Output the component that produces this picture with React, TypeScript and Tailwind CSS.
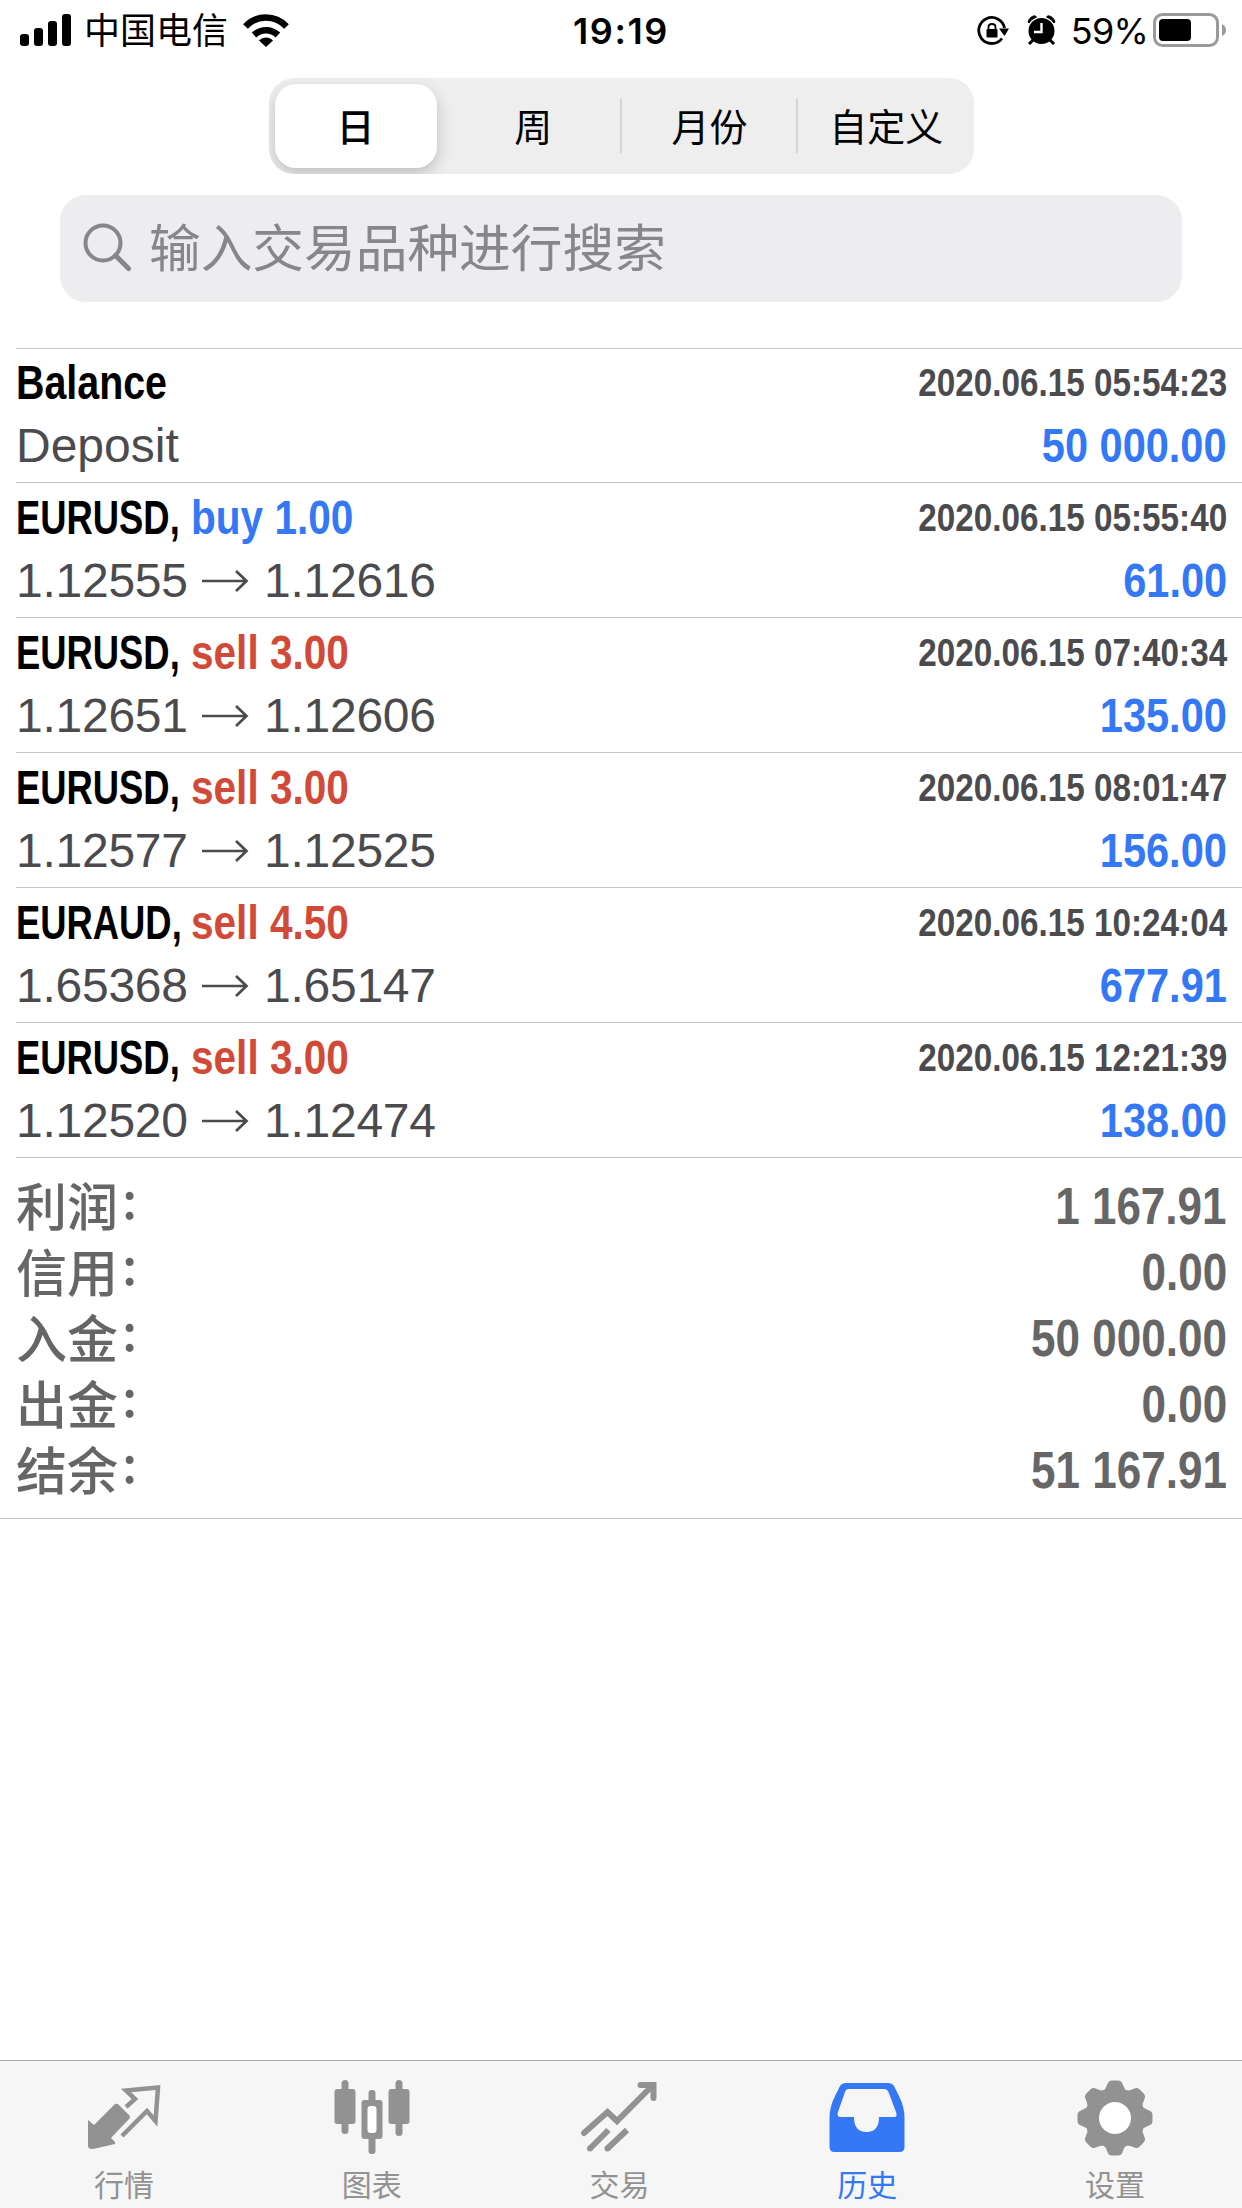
import type { ReactNode } from 'react';

type Deal = {
  symbol: string;
  action?: string;
  side?: 'buy' | 'sell';
  time: string;
  open?: string;
  close?: string;
  note?: string;
  profit: string;
};

const deals: Deal[] = [
  { symbol: 'Balance', time: '2020.06.15 05:54:23', note: 'Deposit', profit: '50 000.00' },
  { symbol: 'EURUSD,', action: 'buy 1.00', side: 'buy', time: '2020.06.15 05:55:40', open: '1.12555', close: '1.12616', profit: '61.00' },
  { symbol: 'EURUSD,', action: 'sell 3.00', side: 'sell', time: '2020.06.15 07:40:34', open: '1.12651', close: '1.12606', profit: '135.00' },
  { symbol: 'EURUSD,', action: 'sell 3.00', side: 'sell', time: '2020.06.15 08:01:47', open: '1.12577', close: '1.12525', profit: '156.00' },
  { symbol: 'EURAUD,', action: 'sell 4.50', side: 'sell', time: '2020.06.15 10:24:04', open: '1.65368', close: '1.65147', profit: '677.91' },
  { symbol: 'EURUSD,', action: 'sell 3.00', side: 'sell', time: '2020.06.15 12:21:39', open: '1.12520', close: '1.12474', profit: '138.00' },
];

const totals = [
  { label: '利润', value: '1 167.91' },
  { label: '信用', value: '0.00' },
  { label: '入金', value: '50 000.00' },
  { label: '出金', value: '0.00' },
  { label: '结余', value: '51 167.91' },
];

const periods = ['日', '周', '月份', '自定义'];

function StatusBar() {
  return (
    <header className="flex h-[60px] items-center justify-between pl-5 pr-[15px] text-black">
      <div className="flex w-[395px] items-center">
        <svg width="52" height="33" viewBox="0 0 52 33">
          <rect x="0" y="20" width="9" height="12" rx="3" />
          <rect x="14" y="14" width="9" height="18" rx="3" />
          <rect x="28" y="7" width="9" height="25" rx="3" />
          <rect x="42" y="0" width="9" height="32" rx="3" />
        </svg>
        <span className="ml-3 pt-[3px] font-['Inter','Noto_Sans_CJK_SC',sans-serif] text-[36px] leading-[57px]">中国电信</span>
        <svg className="ml-[15px]" width="46" height="33" viewBox="0 0 46 33" fill="none" stroke="#000">
          <path d="M2.5 12.5C14 .5 32 .5 43.5 12.5" strokeWidth="6.5" />
          <path d="M11 21C18 14.5 28 14.5 35 21" strokeWidth="6.5" />
          <path d="M16 26.500C20 22.500 26 22.500 30 26.500L23 33Z" fill="#000" stroke="none" />
        </svg>
      </div>
      <span className="pt-[2px] font-['Inter',sans-serif] text-[36px] font-semibold leading-[58px] tracking-[1.6px]">19:19</span>
      <div className="flex w-[400px] items-center justify-end">
        <svg className="mt-[2px]" width="32" height="30" viewBox="0 0 32 30">
          <path d="M27.500 12A13 13 0 1 0 25 22.500" fill="none" stroke="#000" strokeWidth="2.800" />
          <path d="M22 12.500H32L27.500 20Z" />
          <rect x="9.500" y="13" width="11" height="8.500" rx="1" />
          <path d="M11.500 14V11Q11.500 8 15 8Q18.500 8 18.500 11V14" fill="none" stroke="#000" strokeWidth="1.800" />
        </svg>
        <svg className="ml-[18px]" width="30" height="30" viewBox="0 0 30 30">
          <circle cx="14.500" cy="16" r="13" />
          <path d="M1 7Q3 1 8 .8L9.500 2Q4 4 2 8ZM28 7Q26 1 21 .8L19.500 2Q25 4 27 8Z" stroke="#000" strokeWidth="1" />
          <path d="M6 25L2 29M23 25L27 29" stroke="#000" strokeWidth="3" />
          <path d="M14.500 8V17H7" fill="none" stroke="#fff" strokeWidth="2.400" />
        </svg>
        <span className="ml-[14px] pt-[2px] font-['Inter',sans-serif] text-[36px] leading-[58px] tracking-[-0.8px]">59%</span>
        <svg className="ml-[5px]" width="74" height="34" viewBox="0 0 74 34">
          <rect x="1.500" y="1.500" width="63" height="31" rx="8" fill="none" stroke="#9a9a9a" strokeWidth="3" />
          <rect x="6" y="6" width="32" height="22" rx="4" />
          <path d="M69 11Q73 13 73 17Q73 21 69 23Z" fill="#9a9a9a" />
        </svg>
      </div>
    </header>
  );
}

function PeriodSwitch() {
  return (
    <div className="mx-auto mt-[18px] flex h-24 w-[705px] overflow-hidden rounded-[25px] bg-[#eeeeef]">
      {periods.map((p, i) => (
        <button
          key={p}
          className={`flex h-full flex-1 items-center justify-center font-['Noto_Sans_CJK_SC',sans-serif] text-[38px] ${
            i === 0 ? 'font-medium' : 'font-normal'
          }`}
        >
          {i === 0 ? (
            <span className="mr-[2px] flex h-[84px] w-[162px] items-center justify-center rounded-[21px] bg-white pb-[3px] shadow-[0_6px_16px_rgba(0,0,0,0.2)]">
              {p}
            </span>
          ) : (
            <>
              <span className="flex-1 pb-[4px] pl-[2px]">{p}</span>
              {i < 3 && <span className="-mr-px h-[54px] w-[2px] bg-[#d5d5d7]" />}
            </>
          )}
        </button>
      ))}
    </div>
  );
}

function SearchField() {
  return (
    <div className="mx-[60px] mt-[21px] flex h-[107px] items-center rounded-[26px] bg-[#ededef] pl-[23px] text-[#87878a]">
      <svg className="-mt-[2px]" width="50" height="50" viewBox="0 0 50 50" fill="none" stroke="currentColor">
        <circle cx="20" cy="20" r="17.500" strokeWidth="4" />
        <path d="M32.500 32.500L45.500 45.500" strokeWidth="5" strokeLinecap="round" />
      </svg>
      <span className="ml-4 pb-[7px] font-['Noto_Sans_CJK_SC',sans-serif] text-[51.700px]">输入交易品种进行搜索</span>
    </div>
  );
}

function DealRow({ deal }: { deal: Deal }) {
  return (
    <div className="ml-4 h-[135px] border-t border-[#c4c4c6] pr-[15px] pt-[8px] first:h-[134px] first:pt-[7px]">
      <div className="flex h-[54px] items-center justify-between font-bold">
        <div className="flex whitespace-nowrap text-[48px] leading-[54px]">
          <span
            className={`origin-left text-black ${
              deal.action ? 'w-[175px] scale-x-[0.758]' : 'w-[160px] scale-x-[0.82]'
            }`}
          >
            {deal.symbol}
          </span>
          {deal.action && (
            <span
              className={`w-[160px] origin-left scale-x-[0.845] ${
                deal.side === 'buy' ? 'text-[#3478f6]' : 'text-[#d14a38]'
              }`}
            >
              {deal.action}
            </span>
          )}
        </div>
        <span className="origin-right scale-x-[0.853] whitespace-nowrap text-[39px] leading-[54px] text-[#4b4b4e]">{deal.time}</span>
      </div>
      <div className="mt-[9px] flex h-[54px] items-center justify-between text-[48px] leading-[54px]">
        {deal.note ? (
          <span className="text-[#4b4b4e]">{deal.note}</span>
        ) : (
          <div className="flex items-center tracking-[-0.25px] text-[#4b4b4e]">
            <span className="w-[171px]">{deal.open}</span>
            <svg className="ml-[15px]" width="47" height="24" viewBox="0 0 47 24" fill="none" stroke="currentColor" strokeWidth="2.700">
              <path d="M0 12H44M34 2L44.500 12L34 22" />
            </svg>
            <span className="ml-[15px]">{deal.close}</span>
          </div>
        )}
        <span className="origin-right scale-x-[0.865] whitespace-nowrap font-bold text-[#3478f6]">{deal.profit}</span>
      </div>
    </div>
  );
}

function Totals() {
  return (
    <section className="border-b border-[#c4c4c6]">
      <div className="ml-4 h-[361px] border-t border-[#c4c4c6] pr-[15px] pt-[16px] text-[#666666]">
        {totals.map((t) => (
          <div key={t.label} className="flex h-[66px] items-center justify-between">
            <div className="-mt-[7px] flex font-['Noto_Sans_CJK_SC',sans-serif] text-[51px] font-medium leading-[62px]">
              <span>{t.label}</span>
              <span className="-mt-[7px] ml-[4px]">:</span>
            </div>
            <span className="origin-right scale-x-[0.863] whitespace-nowrap text-[51px] font-bold leading-[62px]">{t.value}</span>
          </div>
        ))}
      </div>
    </section>
  );
}

function QuotesIcon() {
  return (
    <svg width="76" height="76" viewBox="0 0 76 76">
      <path d="M2 40L8 45L29 24Q31 23 33 25L43 35Q45 37 43 39L25 58L29 62V64L7 69Q2 69 2 66Z" fill="#929292" />
      <path d="M40 27L49 19L40 10.500L72 7.500L69.500 41L61 31L36 56" fill="none" stroke="#929292" strokeWidth="4.500" />
    </svg>
  );
}

function ChartIcon() {
  return (
    <svg width="76" height="76" viewBox="0 0 76 76" fill="#929292">
      <rect x="7.500" y="0" width="7" height="54" rx="3.500" />
      <rect x="0.500" y="9" width="21" height="35" rx="3" />
      <rect x="34.500" y="10" width="7" height="64" rx="3" />
      <rect x="27.500" y="20" width="21" height="39" rx="3" />
      <rect x="33.500" y="26" width="9" height="27" rx="3" fill="#fff" />
      <rect x="61.500" y="0" width="7" height="56" rx="3.500" />
      <rect x="54.500" y="9" width="21" height="35" rx="3" />
    </svg>
  );
}

function TradeIcon() {
  return (
    <svg width="76" height="76" viewBox="0 0 76 76" fill="none" stroke="#929292" strokeWidth="6">
      <path d="M3 53L26.500 32L36 41L71 6" strokeLinecap="round" />
      <path d="M59.500 5H72.500V18" strokeLinecap="round" />
      <path d="M27.500 50L9 68.500M46 50L26.500 68.500" />
      <path d="M9 68.500V68.400M26.500 68.500V68.400" strokeLinecap="round" />
    </svg>
  );
}

function HistoryIcon() {
  return (
    <svg width="76" height="76" viewBox="0 0 76 76">
      <path d="M17 3H59Q63 3 65 6L70 16Q75.500 27 75.500 38V67Q75.500 72 70.500 72H5.500Q.5 72 .5 67V38Q.5 27 6 16L11 6Q13 3 17 3Z" fill="#3478f6" />
      <path d="M20 9H55Q58 9 59.500 12L67 32Q69 37 65 37H50Q50 52 37.500 52Q25 52 25 37H12Q7 37 9 32L16 12Q17 9 20 9Z" fill="#f6f6f6" />
    </svg>
  );
}

function SettingsIcon() {
  return (
    <svg width="76" height="76" viewBox="0 0 76 76">
      <g fill="#929292">
        <circle cx="38" cy="38" r="30" />
        {[0, 45, 90, 135, 180, 225, 270, 315].map((a) => (
          <path key={a} transform={`rotate(${a} 38 38)`} d="M25 12Q29 9 30.500 4Q31.500 .5 35 .5H41Q44.500 .5 45.500 4Q47 9 51 12L48 22H28Z" />
        ))}
      </g>
      <circle cx="38" cy="38" r="16" fill="#fff" />
    </svg>
  );
}

function TabItem({ label, active, children }: { label: string; active?: boolean; children: ReactNode }) {
  return (
    <a
      className={`flex flex-1 flex-col items-center pt-[19px] font-['Noto_Sans_CJK_SC',sans-serif] text-[30px] ${
        active ? 'text-[#3478f6]' : 'text-[#929292]'
      }`}
    >
      {children}
      <span className="mt-[7px] leading-[40px]">{label}</span>
    </a>
  );
}

export default function App() {
  return (
    <div className="flex h-[2208px] w-[1242px] flex-col overflow-hidden bg-white font-['Liberation_Sans',Arial,sans-serif]">
      <StatusBar />
      <PeriodSwitch />
      <SearchField />
      <main className="mt-[46px] flex-1">
        <div>
          {deals.map((d) => (
            <DealRow key={d.time} deal={d} />
          ))}
        </div>
        <Totals />
      </main>
      <nav className="flex h-[148px] border-t border-[#b0b0b0] bg-[#f6f6f6] pr-[3px]">
        <TabItem label="行情"><QuotesIcon /></TabItem>
        <TabItem label="图表"><ChartIcon /></TabItem>
        <TabItem label="交易"><TradeIcon /></TabItem>
        <TabItem label="历史" active><HistoryIcon /></TabItem>
        <TabItem label="设置"><SettingsIcon /></TabItem>
      </nav>
    </div>
  );
}
